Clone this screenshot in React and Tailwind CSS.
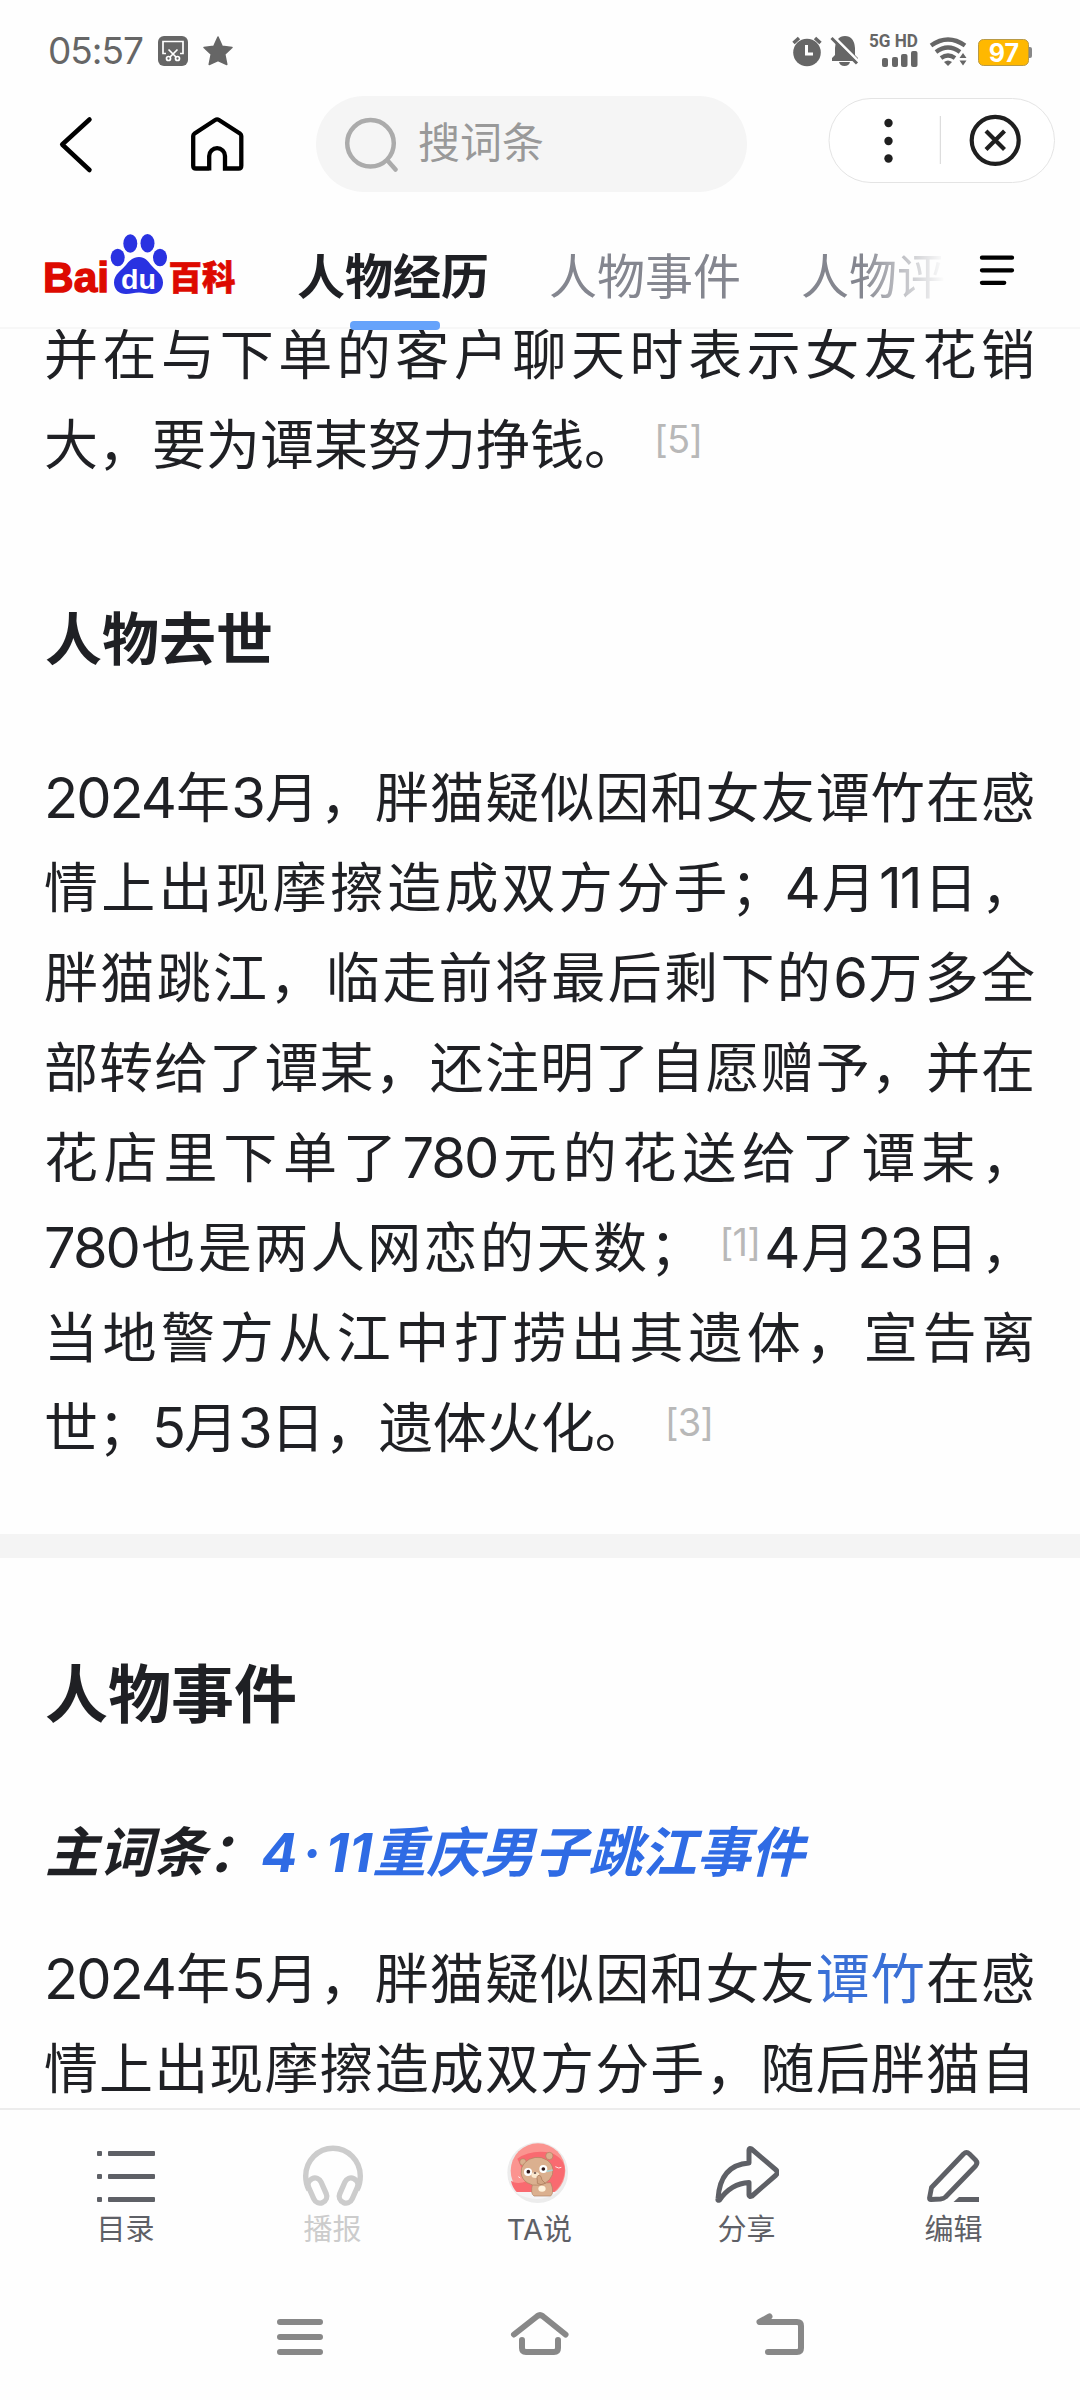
const CJK = 'font-["Inter","Noto_Sans_CJK_SC",sans-serif]';

function Sup({ children, className = "" }) {
  return (
    <span className={`ml-[16px] text-[38px] leading-none tracking-[-0.8px] text-[#b8b8b8] relative -top-[12px] ${className}`}>
      {children}
    </span>
  );
}

function Num({ children }) {
  return <span className="text-[56px] leading-none tracking-[-2px]">{children}</span>;
}

function Line({ children, last = false }) {
  return (
    <div className={last ? "h-[90px] leading-[90px] whitespace-nowrap" : "h-[90px] leading-[90px] whitespace-nowrap [text-align-last:justify]"}>
      {children}
    </div>
  );
}

function StatusBar() {
  return (
    <div className="h-[96px] pl-[48px] pr-[48px] flex items-start justify-between text-[#666]">
      <div className="flex items-center pt-[28px] h-[74px]">
        <span className="w-[110px] text-[37px] leading-[44px] tracking-[-1px]">05:57</span>
        <svg width="30" height="30" viewBox="0 0 30 30">
          <rect width="30" height="30" rx="6" fill="#666" />
          <g fill="none" stroke="#fff" strokeWidth="1.7">
            <path d="M8 17.500H5V5.500H25V17.500H22" />
            <path d="M10.500 13.500L18 21M19.500 13.500L12 21" />
            <circle cx="10.500" cy="22.500" r="2" />
            <circle cx="19.500" cy="22.500" r="2" />
          </g>
        </svg>
        <svg width="32" height="32" viewBox="0 0 32 32" className="ml-[14px]">
          <path d="M16 2l4.200 9.200 9.800 1.300-7.200 6.800 2 10.200L16 25.500l-8.800 4 2-10.200L2 12.500l9.800-1.300z" fill="#666" stroke="#666" strokeWidth="1.500" strokeLinejoin="round" />
        </svg>
      </div>
      <svg width="242" height="44" viewBox="790 30 242 44" className="mt-[30px]">
        <g fill="#666">
          <circle cx="807" cy="52.500" r="13.800" />
          <path d="M793.500 43l5.500-5M820.500 43l-5.500-5" stroke="#666" strokeWidth="3.500" />
          <path d="M806.500 45v9h6.500" stroke="#fff" strokeWidth="3" fill="none" />
          <path d="M832 61V58l3-3V48q1-12 10-12t10 12v7l3 3v3zM839 62h11q-1 4-5.500 4t-5.500-4z" />
          <path d="M833 36L861 64" stroke="#fefefe" strokeWidth="3" />
          <path d="M831.500 38L857 63.500" stroke="#666" strokeWidth="3" />
          <rect x="882" y="58" width="6" height="9" rx="2" />
          <rect x="892" y="57" width="6" height="10" rx="2" />
          <rect x="901" y="54" width="6.500" height="13" rx="2" />
          <rect x="911" y="51" width="6.500" height="16" rx="2" />
          <path d="M944 62q4-3 8 0l-4 4z" />
          <path d="M959.500 58l3.500-5 3.500 5zM959.500 60.500l3.500 5 3.500-5z" />
        </g>
        <g fill="none" stroke="#666" strokeWidth="4.300">
          <path d="M931 45.500q17-12 34 0M936 52q12-9 24 0M941 58q7-5 14 0" />
        </g>
        <text x="869" y="47" fontSize="18" fontWeight="700" fill="#666" textLength="49" lengthAdjust="spacingAndGlyphs" className="font-[Roboto]">5G HD</text>
        <rect x="1027" y="47" width="5" height="11" rx="2" fill="#888" />
        <rect x="978.500" y="39.500" width="50" height="26" rx="5" fill="#ffb800" stroke="#b99a45" />
        <text x="1004" y="61.800" fontSize="25" fontWeight="700" fill="#fff" textAnchor="middle">97</text>
      </svg>
    </div>
  );
}

function TopBar() {
  return (
    <div className="h-[114px] flex items-start">
      <svg width="36" height="60" viewBox="58 115 36 60" className="ml-[58px] mt-[19px]">
        <path d="M89.500 119.500L62.200 144.500L89.500 170" fill="none" stroke="#000" strokeWidth="4.500" strokeLinecap="round" strokeLinejoin="round" />
      </svg>
      <svg width="60" height="60" viewBox="187 115 60 60" className="ml-[93px] mt-[19px]">
        <path d="M209.200 170.500V156a7.900 7.900 0 0 1 15.800 0v12.500h13.500q2.800 0 2.800-2.800V136q0-1.500-1.400-2.500L219 120q-1.900-1.200-3.800 0L194.600 133.500q-1.400 1-1.400 2.500v29.700q0 2.800 2.800 2.800h13.200" fill="none" stroke="#000" strokeWidth="4.300" />
      </svg>
      <div className="ml-[69px] w-[431px] h-[96px] rounded-full bg-[#f5f5f5] flex items-center">
        <svg width="56" height="56" viewBox="343 115 56 56" className="ml-[27px]">
          <circle cx="370.500" cy="142.300" r="23.300" fill="none" stroke="#ababab" strokeWidth="4.500" />
          <path d="M388 160l7.500 8.500" stroke="#ababab" strokeWidth="4.500" strokeLinecap="round" />
        </svg>
        <span className="ml-[19px] -mt-[3px] text-[42px] leading-[60px] text-[#999]">搜词条</span>
      </div>
      <svg width="227" height="86" viewBox="828 97 227 86" className="ml-[81px] mt-[1px]">
        <rect x="829" y="98.500" width="225.500" height="84" rx="42" fill="#fff" stroke="#e4e4e4" />
        <g fill="#1f1f1f">
          <circle cx="888.500" cy="123" r="4.200" />
          <circle cx="888.500" cy="141" r="4.200" />
          <circle cx="888.500" cy="158.500" r="4.200" />
        </g>
        <path d="M940.300 116v48" stroke="#d5d5d5" />
        <g fill="none" stroke="#1f1f1f" strokeWidth="4.200">
          <circle cx="995.200" cy="140.300" r="23.500" />
          <path d="M986 131l18.500 18.500M1004.500 131L986 149.500" />
        </g>
      </svg>
    </div>
  );
}

function Logo() {
  return (
    <svg width="200" height="96" viewBox="41 214 200 96">
      <g fill="#2932e1">
        <ellipse cx="130.300" cy="243.500" rx="7" ry="9.200" />
        <ellipse cx="147.500" cy="243.200" rx="7" ry="9.200" />
        <ellipse cx="117.700" cy="257.500" rx="7" ry="8.700" />
        <ellipse cx="160" cy="257.500" rx="7" ry="8.700" />
        <path d="M139 257c6 0 9 4 12 8 4 5 12 9 12 17.500 0 7-5 11.500-11 11.500-5 0-8-1.500-13-1.500s-8 1.500-13 1.500c-7 0-12-4.500-12-11.500 0-8.500 8-12.500 12-17.500 3-4 7-8 13-8z" />
      </g>
      <g fill="#dd0a00" stroke="#dd0a00">
        <text x="43" y="291.500" fontSize="43" fontWeight="700" strokeWidth="1.400" textLength="66" lengthAdjust="spacingAndGlyphs" className='font-["Liberation_Sans"]'>Bai</text>
        <text x="168.500" y="289.500" fontSize="34" fontWeight="900" strokeWidth="0.600" textLength="67" lengthAdjust="spacingAndGlyphs">百科</text>
      </g>
      <text x="121" y="288.500" fontSize="28" fontWeight="700" fill="#fff" textLength="35" lengthAdjust="spacingAndGlyphs" className='font-["Liberation_Sans"]'>du</text>
    </svg>
  );
}

function Tabs() {
  return (
    <div className="h-[119px] pl-[41px] pr-[64px] flex items-start border-b-2 border-[#f7f7f7] relative">
      <div className="mt-[4px]"><Logo /></div>
      <div className="ml-[56px] mt-[18px] w-[649px] h-[98px] flex items-center gap-[60px] text-[48px] leading-[72px] text-[#84868f] whitespace-nowrap [mask-image:linear-gradient(to_right,black_87%,transparent_100%)]">
        <span className="font-bold text-[#1f2024]">人物经历</span>
        <span>人物事件</span>
        <span>人物评</span>
      </div>
      <svg width="38" height="34" viewBox="980 253 38 34" className="ml-[34px] mt-[43px]">
        <path d="M983 257.300h31M983 270.300h31M983 283.200h23" stroke="#000" strokeWidth="4.300" strokeLinecap="round" />
      </svg>
      <div className="absolute left-[350px] top-[111px] w-[90px] h-[9px] rounded-[4px] bg-[#66a3fb]" />
    </div>
  );
}

function ListIcon() {
  return (
    <svg width="64" height="64" viewBox="94 2143 64 64" fill="#5e6066">
      <rect x="97" y="2151" width="5" height="5" rx="1" />
      <rect x="97" y="2174" width="5" height="5" rx="1" />
      <rect x="97" y="2197" width="5" height="5" rx="1" />
      <rect x="108" y="2151" width="47" height="5" rx="1" />
      <rect x="108" y="2174" width="47" height="5" rx="1" />
      <rect x="108" y="2197" width="47" height="5" rx="1" />
    </svg>
  );
}

function HeadphonesIcon() {
  return (
    <svg width="64" height="64" viewBox="301.500 2143 64 64" fill="none" stroke="#ccc" strokeWidth="5.400">
      <path d="M309.500 2190Q306.200 2184 306.200 2176a27.300 27.800 0 0 1 54.600 0Q360.800 2184 357.500 2190" />
      <rect x="311.200" y="2177.500" width="13.500" height="26" rx="6.700" transform="rotate(-24 318 2190.500)" />
      <rect x="342.300" y="2177.500" width="13.500" height="26" rx="6.700" transform="rotate(24 349 2190.500)" />
    </svg>
  );
}

function BearAvatar() {
  return (
    <svg width="64" height="64" viewBox="16 28 192 192">
      <circle cx="111" cy="126" r="91" fill="#ececec" />
      <circle cx="112" cy="120" r="82" fill="#fb9490" />
      <path d="M50 84Q90 56 150 66Q196 84 192 124Q188 162 158 186H50Q34 170 31 150Q50 164 80 150Z" fill="#f96a70" />
      <path d="M42 184Q110 226 172 184Z" fill="#f5f5f7" />
      <g fill="#dbb08f" stroke="#b08060" strokeWidth="2">
        <circle cx="67" cy="94" r="10" />
        <circle cx="146" cy="76" r="11" />
        <path d="M96 158Q88 190 100 196H150Q162 186 150 156Z" />
        <ellipse cx="109" cy="122" rx="48" ry="42" transform="rotate(-8 109 122)" />
      </g>
      <ellipse cx="124" cy="174" rx="11" ry="9" fill="#fff3dd" />
      <ellipse cx="104" cy="133" rx="12" ry="9" fill="#fbe9cf" />
      <path d="M110 150Q106 134 116 134Q122 134 124 148L134 158Q120 166 110 158Z" fill="#d3a683" stroke="#a67658" strokeWidth="2" />
      <circle cx="82" cy="124" r="12" fill="#fff" />
      <circle cx="128" cy="115" r="12" fill="#fff" />
      <circle cx="83" cy="123" r="5.500" fill="#31191a" />
      <circle cx="128" cy="115" r="5.500" fill="#31191a" />
      <ellipse cx="103" cy="127" rx="4" ry="2.500" fill="#3c2222" />
      <path d="M138 122l18-4" stroke="#a9d3d3" strokeWidth="5" />
      <path d="M164 108l10 4 8-2M53 138l6 4" stroke="#fff" strokeWidth="2.500" fill="none" />
    </svg>
  );
}

function ShareIcon() {
  return (
    <svg width="64" height="64" viewBox="714 2143 64 64" fill="none" stroke="#5e6066" strokeWidth="5" strokeLinejoin="round">
      <path d="M748 2150q0-2.500 2.500-1L774.500 2169.500q3.500 3 0 6L751 2196q-3 1.500-3-1V2182.500q-18 1-29.500 17.500q-2 1-1.500-1q2-34 31-36z" />
    </svg>
  );
}

function PencilIcon() {
  return (
    <svg width="64" height="64" viewBox="922 2143 64 64">
      <path d="M931.500 2187.500L963.500 2154q3-2.800 6 0L975.500 2160q2.800 3 0 6L945.500 2197q-2 1.600-5 2L931 2199.500q-1.500 0-1.500-1.500z" fill="none" stroke="#5e6066" strokeWidth="4.800" strokeLinejoin="round" />
      <path d="M953.500 2202l5.500-5H979v5z" fill="#5e6066" />
    </svg>
  );
}

function NavItem({ label, children, color = "text-[#5e6066]" }) {
  return (
    <div className={`w-[207px] flex flex-col items-center ${color}`}>
      <div className="h-[64px]">{children}</div>
      <span className="mt-[5px] text-[29px] leading-[36px]">{label}</span>
    </div>
  );
}

function SystemNav() {
  return (
    <div className="h-[120px] pt-[27px] pl-[270px] flex gap-[180px]">
      <svg width="60" height="60" viewBox="270 2307 60 60">
        <path d="M280 2322h40M280 2337h40M280 2352h40" stroke="#888" strokeWidth="6" strokeLinecap="round" />
      </svg>
      <svg width="60" height="60" viewBox="510 2307 60 60" fill="none" stroke="#888" strokeWidth="6" strokeLinecap="round" strokeLinejoin="round">
        <path d="M514 2334.500L537.500 2316q2.500-1.800 5 0L565.500 2334.500" />
        <path d="M522 2340v8q0 4 4 4h28q4 0 4-4v-8" />
      </svg>
      <svg width="60" height="60" viewBox="750 2307 60 60" fill="none" stroke="#888" strokeWidth="6" strokeLinecap="round" strokeLinejoin="round">
        <path d="M769.500 2316.500L759.500 2322H797q4 0 4 4v22q0 4-4 4H768" />
      </svg>
    </div>
  );
}

export default function App() {
  return (
    <div className={`${CJK} w-[1080px] h-[2400px] overflow-hidden bg-[#fefefe] flex flex-col text-[#1f2024]`}>
      <StatusBar />
      <TopBar />
      <Tabs />
      <main className="h-[1779px] shrink-0 overflow-hidden text-[54px]">
        <div className="pl-[44px] pr-[45px] -mt-[18px]">
          <Line>并在与下单的客户聊天时表示女友花销</Line>
          <Line last>大，要为谭某努力挣钱。<Sup>[5]</Sup></Line>
          <h3 className="mt-[104px] h-[90px] leading-[90px] pl-px text-[57px] font-bold">人物去世</h3>
          <div className="mt-[69px]">
            <Line><Num>2024</Num>年<Num>3</Num>月，胖猫疑似因和女友谭竹在感</Line>
            <Line>情上出现摩擦造成双方分手；<Num>4</Num>月<Num>11</Num>日，</Line>
            <Line>胖猫跳江，临走前将最后剩下的<Num>6</Num>万多全</Line>
            <Line>部转给了谭某，还注明了自愿赠予，并在</Line>
            <Line>花店里下单了<Num>780</Num>元的花送给了谭某，</Line>
            <Line><Num>780</Num>也是两人网恋的天数；<Sup className="mr-[4px]">[1]</Sup><Num>4</Num>月<Num>23</Num>日，</Line>
            <Line>当地警方从江中打捞出其遗体，宣告离</Line>
            <Line last>世；<Num>5</Num>月<Num>3</Num>日，遗体火化。<Sup>[3]</Sup></Line>
          </div>
        </div>
        <div className="mt-[60px] h-[24px] bg-[#f4f4f4]" />
        <div className="pl-[44px] pr-[45px]">
          <h2 className="mt-[91px] h-[90px] leading-[90px] pl-px text-[63px] font-bold">人物事件</h2>
          <div className="mt-[69px] h-[90px] leading-[90px] pl-px font-bold italic whitespace-nowrap">
            主词条：<span className="text-[#2f6be4]">4<span className="mx-[5px]">·</span>11重庆男子跳江事件</span>
          </div>
          <div className="mt-[37px]">
            <Line><Num>2024</Num>年<Num>5</Num>月，胖猫疑似因和女友<span className="text-[#3a70d6]">谭竹</span>在感</Line>
            <Line>情上出现摩擦造成双方分手，随后胖猫自</Line>
          </div>
        </div>
      </main>
      <nav className="h-[172px] shrink-0 border-t-2 border-[#ececec] px-[22px] pt-[33px] flex">
        <NavItem label="目录"><ListIcon /></NavItem>
        <NavItem label="播报" color="text-[#ccc]"><HeadphonesIcon /></NavItem>
        <NavItem label="TA说"><div className="-mt-[3px] -ml-[3px]"><BearAvatar /></div></NavItem>
        <NavItem label="分享"><ShareIcon /></NavItem>
        <NavItem label="编辑"><PencilIcon /></NavItem>
      </nav>
      <SystemNav />
    </div>
  );
}
